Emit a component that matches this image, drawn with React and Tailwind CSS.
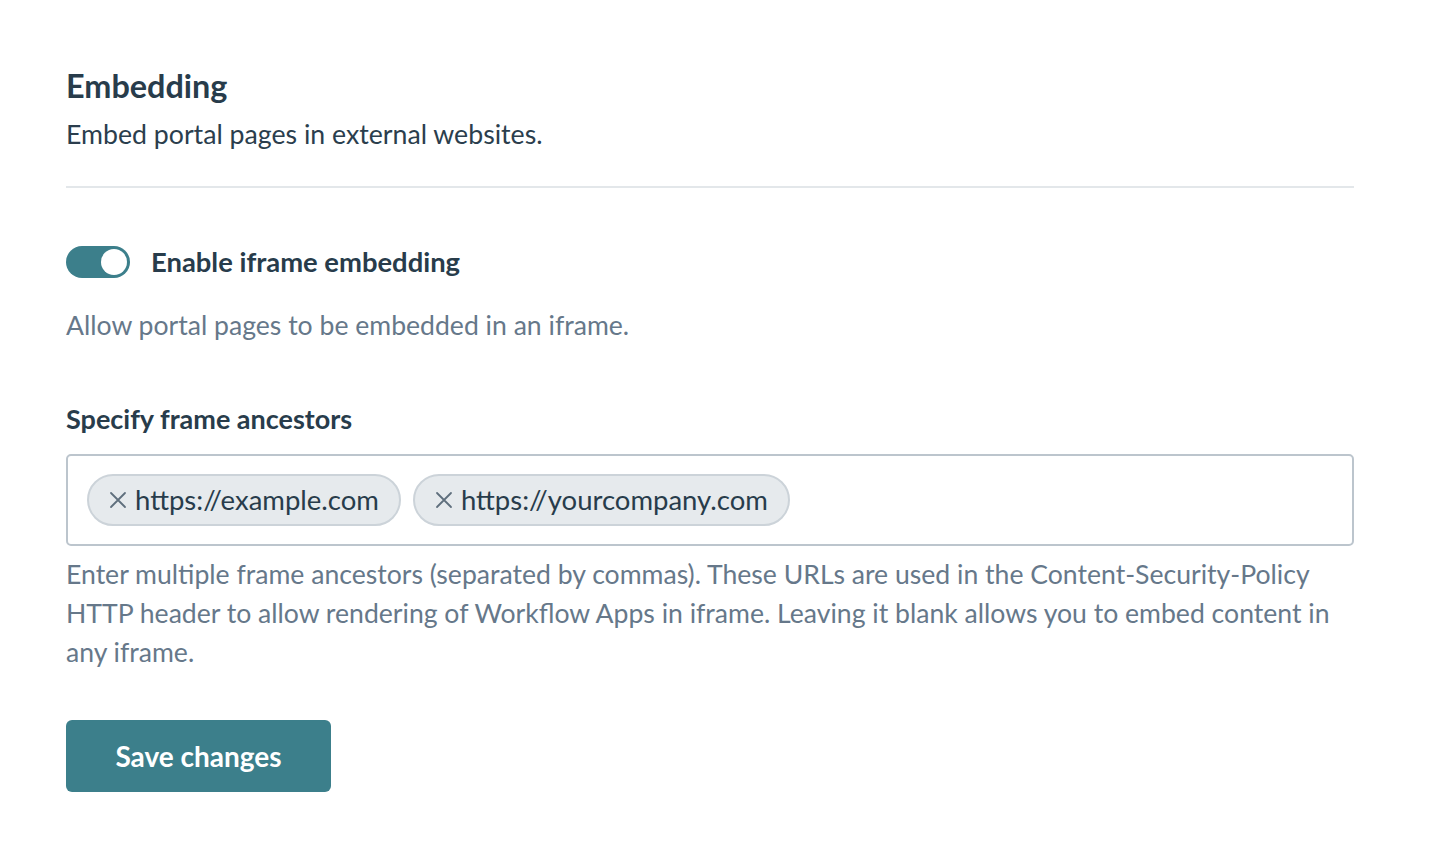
import React from "react";

function Chip({ label }) {
  return (
    <div className="flex items-center h-[52px] rounded-full bg-[#e6eaed] border-2 border-[#ccd3d9] pl-[20px] pr-[20px] gap-[8px]">
      <svg width="18" height="18" viewBox="0 0 18 18" className="text-[#5f6f7d]">
        <path d="M2 2 L16 16 M16 2 L2 16" stroke="currentColor" strokeWidth="1.8" strokeLinecap="round" />
      </svg>
      <span className="text-[27.5px] text-[#283c4b]">{label}</span>
    </div>
  );
}

export default function App() {
  return (
    <div className="min-h-[850px] bg-white font-['Lato',sans-serif] text-[#283c4b]">
      <div className="px-[66px] pt-[66px] w-[1420px]">
        <h1 className="text-[32.4px] font-bold leading-[40px] text-[#283c4b]">Embedding</h1>
        <p className="mt-[8px] text-[26.7px] leading-[40px] text-[#2b3e4d]">Embed portal pages in external websites.</p>
        <div className="mt-[32px] h-[2px] bg-[#e3e7ea]" />

        <div className="mt-[58px] flex items-center gap-[21px]">
          <div className="flex items-center justify-end w-[64px] h-[32px] rounded-full bg-[#3c7f8b] px-[3px]">
            <div className="w-[26px] h-[26px] rounded-full bg-white" />
          </div>
          <span className="text-[27.4px] font-bold leading-[32px]">Enable iframe embedding</span>
        </div>
        <p className="mt-[27px] text-[26.6px] leading-[40px] text-[#66788a]">Allow portal pages to be embedded in an iframe.</p>

        <h2 className="mt-[54px] text-[27px] font-bold leading-[40px]">Specify frame ancestors</h2>
        <div className="mt-[15px] h-[92px] rounded-[5px] border-2 border-[#bcc5cd] flex items-center px-[19px] gap-[12px]">
          <Chip label="https://example.com" />
          <Chip label="https://yourcompany.com" />
        </div>
        <p className="mt-[9px] text-[26.6px] leading-[39px] text-[#66788a]">
          Enter multiple frame ancestors (separated by commas). These URLs are used in the Content-Security-Policy
          <br />
          HTTP header to allow rendering of Workflow Apps in iframe. Leaving it blank allows you to embed content in
          <br />
          any iframe.
        </p>

        <button className="mt-[48px] h-[72px] w-[265px] rounded-[6px] bg-[#3c7f8b] text-white text-[28px] font-bold">
          Save changes
        </button>
      </div>
    </div>
  );
}
